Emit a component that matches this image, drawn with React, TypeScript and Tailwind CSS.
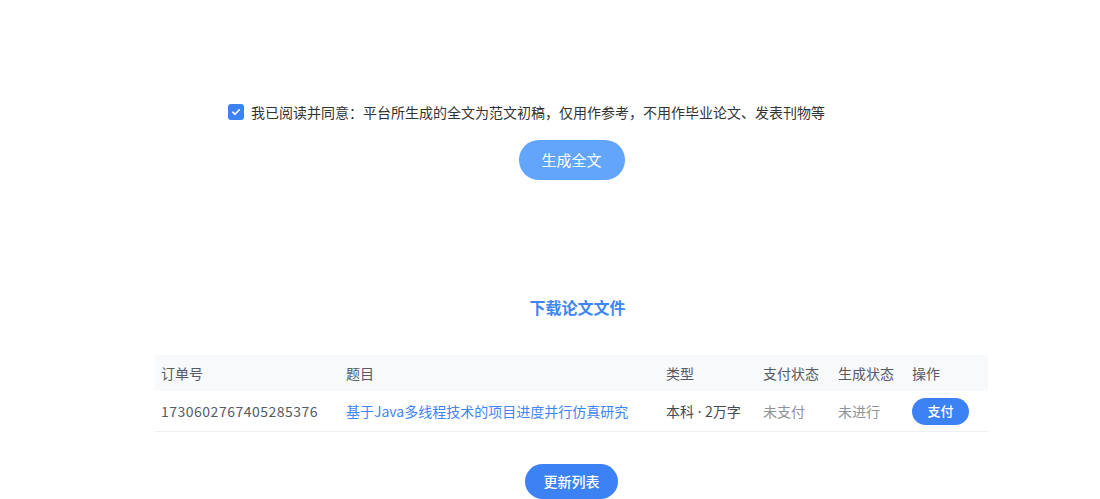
import React from "react";

const font = { fontFamily: '"Noto Sans CJK SC", "Noto Sans", sans-serif' };

export default function App() {
  return (
    <div className="w-[1100px] h-[499px] overflow-hidden bg-white pl-[43px]" style={font}>
      <div className="flex flex-col items-center pt-[102px]">
        <div className="w-[833px] pl-[73px] flex items-center h-[20px]">
          <span className="w-[16px] h-[16px] rounded-[3px] bg-[#3d82f5] flex items-center justify-center">
            <svg width="10" height="10" viewBox="0 0 10 10" fill="none">
              <path d="M1.8 5.2 L4 7.3 L8.3 2.8" stroke="white" strokeWidth="1.6" strokeLinecap="round" strokeLinejoin="round" />
            </svg>
          </span>
          <span className="ml-[7px] text-[14px] leading-[20px] text-[#333333]">
            我已阅读并同意：平台所生成的全文为范文初稿，仅用作参考，不用作毕业论文、发表刊物等
          </span>
        </div>
        <button className="mt-[18px] w-[106px] h-[40px] rounded-full bg-[#62a5fa] text-white text-[15px]">
          生成全文
        </button>
        <div className="mt-[115px] h-[24px] leading-[24px] text-[16px] font-bold text-[#3f85f5] pl-[12px]">
          下载论文文件
        </div>
        <div className="mt-[36px] w-[833px] text-[14px]">
          <div className="grid grid-cols-[185px_320px_97px_75px_74px_82px] h-[36px] items-center bg-[#f8f9fb] text-[#555a63]">
            <div className="px-[6px]">订单号</div>
            <div className="px-[6px]">题目</div>
            <div className="px-[6px]">类型</div>
            <div className="px-[6px]">支付状态</div>
            <div className="px-[6px]">生成状态</div>
            <div className="px-[6px]">操作</div>
          </div>
          <div className="grid grid-cols-[185px_320px_97px_75px_74px_82px] h-[41px] items-center border-b border-[#eeeff3]">
            <div className="px-[6px] text-[#555a63] tracking-[0.5px]">1730602767405285376</div>
            <div className="px-[6px] text-[#3f85f5] whitespace-nowrap">基于Java多线程技术的项目进度并行仿真研究</div>
            <div className="px-[6px] text-[#444a52] whitespace-nowrap">
              本科<span style={{ fontFamily: '"Noto Sans", sans-serif' }}> · </span>2万字
            </div>
            <div className="px-[6px] text-[#8e9299]">未支付</div>
            <div className="px-[6px] text-[#8e9299]">未进行</div>
            <div className="px-[6px]">
              <button className="w-[57px] h-[27px] rounded-full bg-[#3d82f5] text-white text-[13px] font-medium">
                支付
              </button>
            </div>
          </div>
        </div>
        <button className="mt-[32px] w-[93px] h-[35px] rounded-full bg-[#3d82f5] text-white text-[14px] font-medium">
          更新列表
        </button>
      </div>
    </div>
  );
}
